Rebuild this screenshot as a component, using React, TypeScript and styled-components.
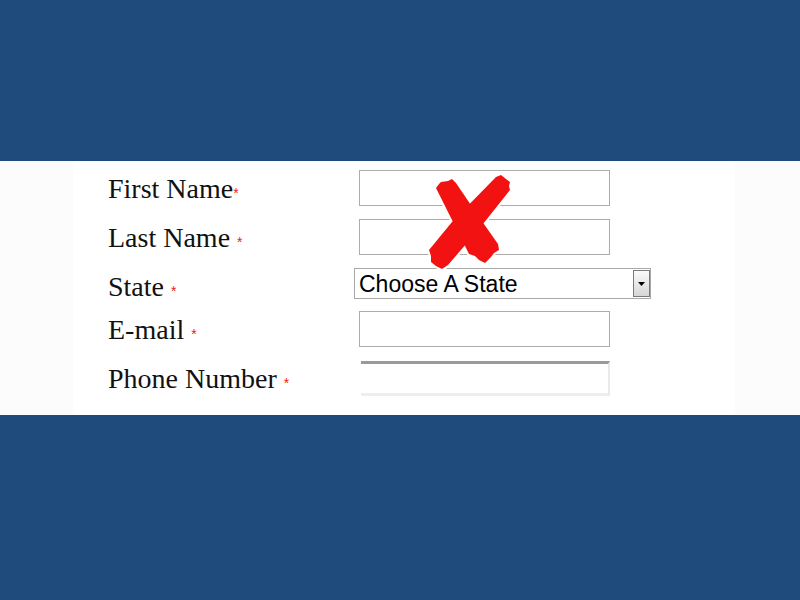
import React from "react";
import styled, { createGlobalStyle } from "styled-components";

const GlobalStyle = createGlobalStyle`
  html, body {
    margin: 0;
    padding: 0;
    background: #1f4a7c;
  }
  body {
    width: 800px;
    height: 600px;
    overflow: hidden;
  }
`;

const Page = styled.div`
  width: 800px;
  height: 600px;
  padding-top: 161px;
  box-sizing: border-box;
`;

const Band = styled.div`
  background: #fcfcfc;
  height: 254px;
  display: flex;
  padding-left: 73px;
`;

const Sheet = styled.form`
  position: relative;
  width: 662px;
  background: #ffffff;
  box-sizing: border-box;
  padding: 2px 0 0 35px;
  margin: 0;
`;

const Row = styled.div<{ $h: number }>`
  display: flex;
  align-items: center;
  height: ${props => props.$h}px;
`;

const Label = styled.label<{ $shift?: number }>`
  width: 251px;
  flex-shrink: 0;
  font-family: "Liberation Serif", "Times New Roman", serif;
  font-size: 28px;
  line-height: 27px;
  color: #111;
  padding-top: ${props => props.$shift ?? 6}px;
`;

const Star = styled.span`
  font-family: "Liberation Sans", Arial, sans-serif;
  font-size: 14px;
  color: #f01818;
`;

const TextInput = styled.input`
  width: 251px;
  height: 36px;
  box-sizing: border-box;
  border: 1px solid #acacac;
  background: #fff;
  margin: 0;
  padding: 0 4px;
  outline: none;
`;

const PhoneInput = styled.input`
  width: 249px;
  height: 35px;
  box-sizing: border-box;
  margin: 1px 0 0 2px;
  border: none;
  border-top: 3px solid #9a9a9a;
  border-right: 2px solid #e9e9e9;
  border-bottom: 3px solid #eeeeee;
  background: #fff;
  outline: none;
`;

const SelectWrap = styled.div`
  position: relative;
  width: 297px;
  height: 31px;
  margin: 2px 0 0 -5px;
`;

const Select = styled.select`
  appearance: none;
  -webkit-appearance: none;
  width: 100%;
  height: 100%;
  box-sizing: border-box;
  border: 1px solid #a8a8a8;
  border-radius: 0;
  background: #fff;
  margin: 0;
  padding: 0 0 0 4px;
  font-family: "Liberation Sans", Arial, sans-serif;
  font-size: 23px;
  color: #000;
  outline: none;
`;

const ArrowButton = styled.div`
  position: absolute;
  top: 2px;
  right: 1px;
  width: 17px;
  height: 27px;
  box-sizing: border-box;
  border: 1px solid #7a7a7a;
  background: linear-gradient(#fbfbfb, #d6d6d6);
  display: flex;
  align-items: center;
  justify-content: center;
  pointer-events: none;
`;

const Cross = styled.svg`
  position: absolute;
  left: 0;
  top: 0;
  pointer-events: none;
`;

// brush-stroke X drawn over the first two fields
function RedCross() {
  const strokeA = "M436,188 L439,184 L441,182 L448,181 L452,179 L456,183 L479,217 L498,244 L499,250 L494,253 L491,257 L485,263 L479,260 L475,256 L469,254 L453,222 Z";
  const strokeB = "M496,177 L501,175 L506,179 L510,182 L509,186 L510,190 L479,229 L448,265 L442,269 L436,266 L431,262 L431,256 L429,250 L452,222 Z";
  return (
    <Cross width="662" height="254" viewBox="73 161 662 254">
      <path d={strokeA} fill="#fff" stroke="#fff" strokeWidth="4" strokeLinejoin="round" />
      <path d={strokeB} fill="#fff" stroke="#fff" strokeWidth="4" strokeLinejoin="round" />
      <path d={strokeA} fill="#f21212" />
      <path d={strokeB} fill="#f21212" />
    </Cross>
  );
}

export default function App() {
  return (
    <Page>
      <GlobalStyle />
      <Band>
        <Sheet onSubmit={e => e.preventDefault()}>
          <Row $h={49}>
            <Label>First Name<Star>*</Star></Label>
            <TextInput type="text" />
          </Row>
          <Row $h={49}>
            <Label>Last Name <Star>*</Star></Label>
            <TextInput type="text" />
          </Row>
          <Row $h={43}>
            <Label $shift={12}>State <Star>*</Star></Label>
            <SelectWrap>
              <Select defaultValue="">
                <option value="">Choose A State</option>
              </Select>
              <ArrowButton>
                <svg width="7" height="4" viewBox="0 0 7 4">
                  <path d="M0,0 L7,0 L3.5,4 Z" fill="#000" />
                </svg>
              </ArrowButton>
            </SelectWrap>
          </Row>
          <Row $h={49}>
            <Label>E-mail <Star>*</Star></Label>
            <TextInput type="email" />
          </Row>
          <Row $h={49}>
            <Label>Phone Number <Star>*</Star></Label>
            <PhoneInput type="tel" />
          </Row>
          <RedCross />
        </Sheet>
      </Band>
    </Page>
  );
}
